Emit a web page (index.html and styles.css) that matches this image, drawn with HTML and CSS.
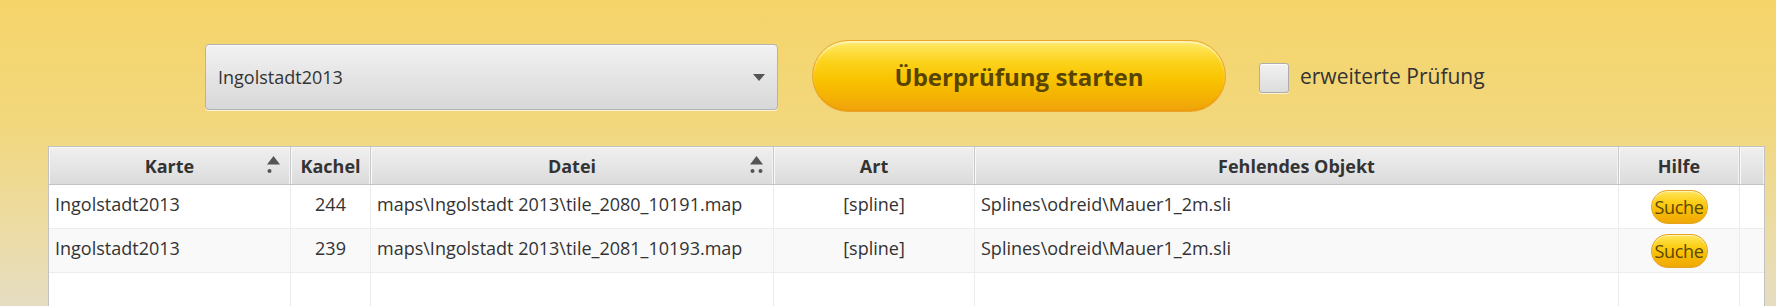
FILE: index.html
```html
<!DOCTYPE html>
<html lang="de">
<head>
<meta charset="utf-8">
<title>Überprüfung</title>
<link rel="stylesheet" href="styles.css">
</head>
<body>
<div class="app">
  <div class="toolbar">
    <div class="combo">
      <span class="combo-text">Ingolstadt2013</span>
      <svg class="combo-arrow" width="12" height="7" viewBox="0 0 12 7"><path d="M0 0H12L6 7Z" fill="#555"/></svg>
    </div>
    <button class="start">Überprüfung starten</button>
    <label class="check"><span class="box"></span><span class="check-label">erweiterte Prüfung</span></label>
  </div>

  <div class="table">
    <div class="hcell sorted">Karte
      <span class="sort"><svg width="13" height="17" viewBox="0 0 13 17"><path d="M6.5 0L13 8.5H0Z" fill="#555"/><circle cx="2.5" cy="15" r="2" fill="#555"/></svg></span>
    </div>
    <div class="hcell">Kachel</div>
    <div class="hcell sorted">Datei
      <span class="sort"><svg width="13" height="17" viewBox="0 0 13 17"><path d="M6.5 0L13 8.5H0Z" fill="#555"/><circle cx="2.5" cy="15" r="2" fill="#555"/><circle cx="10.5" cy="15" r="2" fill="#555"/></svg></span>
    </div>
    <div class="hcell">Art</div>
    <div class="hcell">Fehlendes Objekt</div>
    <div class="hcell">Hilfe</div>
    <div class="hcell filler"></div>

    <div class="cell left">Ingolstadt2013</div>
    <div class="cell center">244</div>
    <div class="cell left">maps\Ingolstadt 2013\tile_2080_10191.map</div>
    <div class="cell center">[spline]</div>
    <div class="cell left">Splines\odreid\Mauer1_2m.sli</div>
    <div class="cell center"><button class="suche">Suche</button></div>
    <div class="cell"></div>

    <div class="cell left odd">Ingolstadt2013</div>
    <div class="cell center odd">239</div>
    <div class="cell left odd">maps\Ingolstadt 2013\tile_2081_10193.map</div>
    <div class="cell center odd">[spline]</div>
    <div class="cell left odd">Splines\odreid\Mauer1_2m.sli</div>
    <div class="cell center odd"><button class="suche">Suche</button></div>
    <div class="cell odd"></div>

    <div class="cell empty"></div>
    <div class="cell empty"></div>
    <div class="cell empty"></div>
    <div class="cell empty"></div>
    <div class="cell empty"></div>
    <div class="cell empty"></div>
    <div class="cell empty"></div>
  </div>
</div>
</body>
</html>
```

FILE: styles.css
```css
* { box-sizing: border-box; }

html, body {
  margin: 0;
  height: 306px;
  overflow: hidden;
}

body {
  font-family: "Open Sans", "Noto Sans", sans-serif;
  color: #333;
  background: linear-gradient(to bottom, #f5d56a 0%, #f2d77c 40%, #ecdca5 75%, #e6ddc2 100%);
}

.app {
  display: flex;
  flex-direction: column;
  height: 306px;
  padding-top: 40px;
}

.toolbar {
  display: flex;
  align-items: center;
  height: 72px;
  flex: none;
  padding-left: 205px;
}

.combo {
  width: 573px;
  height: 66px;
  display: flex;
  align-items: center;
  justify-content: space-between;
  padding: 0 12px 0 12px;
  border: 1px solid #b3b3b3;
  border-radius: 4px;
  background: linear-gradient(to bottom, #f2f2f2 0%, #e3e3e3 55%, #d8d8d8 100%);
  box-shadow: inset 0 1px 0 #fafafa, 0 1px 0 rgba(255,255,255,0.75);
  font-size: 18px;
  margin-top: 2px;
}

.combo-text { color: #333; }
.combo-arrow { display: block; margin-top: 1px; }

.start {
  margin-left: 34px;
  width: 414px;
  height: 72px;
  border-radius: 36px;
  border: 1px solid #eba52a;
  background: linear-gradient(to bottom, #ffea6a 0%, #fcd21c 30%, #f9c300 55%, #f4b204 80%, #efa20c 100%);
  box-shadow: inset 0 2px 2px rgba(255,255,255,0.55), inset 0 -1px 1px rgba(230,140,0,0.4);
  font-family: "Open Sans", "Noto Sans", sans-serif;
  font-weight: 700;
  font-size: 24px;
  color: #584400;
  padding: 0;
}

.check {
  display: flex;
  align-items: center;
  margin-left: 33px;
  margin-top: 3px;
}

.box {
  width: 30px;
  height: 30px;
  border: 1px solid #adadad;
  border-radius: 3px;
  background: linear-gradient(to bottom, #f2f2f2, #dcdcdc);
  box-shadow: inset 0 1px 0 #fbfbfb, 0 1px 0 rgba(255,255,255,0.7);
}

.check-label {
  margin-left: 11px;
  font-size: 21px;
  color: #333;
  margin-top: -3px;
}

.table {
  flex: 1;
  margin-top: 34px;
  margin-left: 48px;
  width: 1717px;
  border: 1px solid #c2c2c2;
  border-bottom: none;
  background: #fff;
  display: grid;
  grid-template-columns: 242px 80px 403px 201px 644px 121px 1fr;
  grid-template-rows: 38px 44px 44px 1fr;
}

.hcell {
  position: relative;
  display: flex;
  align-items: center;
  justify-content: center;
  font-weight: 700;
  font-size: 18px;
  color: #333;
  padding-top: 1px;
  background: linear-gradient(to bottom, #efefef 0%, #e6e6e6 50%, #dbdbdb 100%);
  border-right: 1px solid #c9c9c9;
  border-bottom: 1px solid #c3c3c3;
  box-shadow: inset 1px 1px 0 #f9f9f9, inset -1px 0 0 #f3f3f3;
}

.hcell.filler { border-right: none; }

.sort {
  position: absolute;
  right: 10px;
  top: 9px;
  line-height: 0;
}

.cell {
  display: flex;
  align-items: center;
  font-size: 18px;
  color: #333;
  border-right: 1px solid #ececec;
  border-bottom: 1px solid #ececec;
  padding: 0 6px 6px 6px;
  white-space: nowrap;
}

.cell.odd { background: #f9f9f9; }
.cell:nth-child(7n) { border-right: none; }
.cell.empty { border-bottom: none; background: #fff; }
.cell.left { justify-content: flex-start; }
.cell.center { justify-content: center; }
.cell.center .suche { margin-top: 6px; }

.suche {
  width: 57px;
  height: 34px;
  border-radius: 17px;
  border: 1px solid #e6a322;
  background: linear-gradient(to bottom, #ffe65c 0%, #fccf18 35%, #f7bd02 60%, #f0a808 100%);
  box-shadow: inset 0 1px 1px rgba(255,255,255,0.6);
  font-family: "Open Sans", "Noto Sans", sans-serif;
  font-size: 18px;
  color: #5a4700;
  padding: 0;
  letter-spacing: -0.3px;
}
```
